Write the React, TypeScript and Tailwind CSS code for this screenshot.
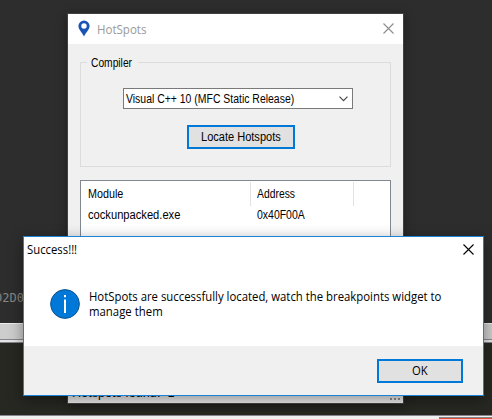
import { useLayoutEffect, useRef, useState } from "react";

const SANS = "font-['Liberation_Sans',sans-serif]";
const UI = "font-['Open_Sans','Noto_Sans',sans-serif]";

/** Single line label condensed or widened to an exact width. */
function Label({ text, width, className = "" }: { text: string; width: number; className?: string }) {
  const ref = useRef<HTMLSpanElement>(null);
  const [scale, setScale] = useState(1);
  useLayoutEffect(() => {
    if (ref.current) setScale(width / ref.current.offsetWidth);
  }, [text, width]);
  return (
    <span className={`block whitespace-nowrap ${className}`} style={{ width }}>
      <span ref={ref} className="inline-block origin-left" style={{ transform: `scaleX(${scale})` }}>
        {text}
      </span>
    </span>
  );
}

function Cross({ className }: { className: string }) {
  return (
    <svg className={className} width="11" height="11" viewBox="0 0 11 11" fill="none" stroke="currentColor" strokeWidth="1.1">
      <path d="M.5.5l10 10M10.5.5l-10 10" />
    </svg>
  );
}

function Backdrop() {
  return (
    <div className="flex h-full flex-col">
      <div className="flex h-[323px] items-end bg-[#2d2d2d]">
        <div className="-ml-[5px] mb-[17px] font-['DejaVu_Sans_Mono',monospace] text-[12px] leading-4 text-[#858585]">
          <Label text="02D0" width={29} />
        </div>
      </div>
      <div className="h-4 border-t border-[#ededed] bg-[#cdcdcd]" />
      <div className="h-1 border-y border-[#85858c] bg-[#e6e6e6]" />
      <div className="h-[72px] bg-[#272822]" />
      <div className="flex h-1 justify-end border-t border-[#8a858e] bg-[#f0f0f0]">
        <div className="mt-px h-[2px] w-[53px] border-t border-[#828790] bg-[#dc4f34]" />
      </div>
    </div>
  );
}

function HotSpotsWindow() {
  return (
    <div className={`absolute left-[67px] top-[13px] flex h-[391px] w-[337px] flex-col border border-[#424242] bg-[#f0f0f0] text-[12px] leading-4 text-black shadow-[0_2px_10px_rgba(0,0,0,0.35)] ${SANS}`}>
      <div className="flex h-[30px] shrink-0 items-center bg-white pl-[10px] pr-[9px]">
        <svg width="12" height="17" viewBox="0 0 12 17" className="-mt-[2px]">
          <path fill="#1a54b5" fillRule="evenodd" d="M6 .5A5.6 5.6 0 0 0 .4 6.1C.4 9.8 4 12.5 6 16.5c2-4 5.6-6.7 5.6-10.4A5.6 5.6 0 0 0 6 .5Zm0 2.8a2.7 2.7 0 1 1 0 5.4 2.7 2.7 0 0 1 0-5.4Z" />
        </svg>
        <Label text="HotSpots" width={49} className={`ml-[7px] mt-px text-[#999] ${UI}`} />
        <Cross className="ml-auto mt-[-2px] text-[#8c8c8c]" />
      </div>

      <div className="mx-3 mt-[18px] flex h-[105px] w-[311px] shrink-0 flex-col border border-[#dcdcdc]">
        <div className="-mt-[8px] ml-[6px] w-[51px] bg-[#f0f0f0] pl-1">
          <Label text="Compiler" width={41} />
        </div>
        <div className="ml-[42px] mt-[17px] flex h-[21px] w-[230px] items-center justify-between border border-[#7a7a7a] bg-white pl-[2px] pr-1">
          <Label text="Visual C++ 10 (MFC Static Release)" width={168} />
          <svg width="9" height="6" viewBox="0 0 9 6" fill="none" stroke="#4a4a4a" strokeWidth="1.2">
            <path d="M.5.7l4 4 4-4" />
          </svg>
        </div>
        <button className="ml-[106px] mt-4 flex h-6 w-[108px] items-center justify-center border-2 border-[#0078d7] bg-[#e1e1e1]">
          <Label text="Locate Hotspots" width={80} />
        </button>
      </div>

      <div className="mx-3 mt-[13px] h-[200px] w-[311px] shrink-0 border border-[#828790] bg-white">
        <div className="mt-px flex h-6 items-center">
          <div className="flex h-full w-[170px] items-center border-r border-[#e2e2e2] pl-[7px]">
            <Label text="Module" width={35} />
          </div>
          <div className="flex h-full w-[103px] items-center border-r border-[#e2e2e2] pl-[6px]">
            <Label text="Address" width={38} />
          </div>
        </div>
        <div className="mt-px flex">
          <div className="w-[170px] pl-[7px]">
            <Label text="cockunpacked.exe" width={92} />
          </div>
          <div className="pl-[6px]">
            <Label text="0x40F00A" width={48} />
          </div>
        </div>
      </div>

      <div className="mt-auto flex h-[20px] items-end justify-between pl-1 pr-[3px]">
        <Label text="Hotspots found:  1" width={102} className="mb-[2px] whitespace-pre" />
        <div className="mb-[3px] flex gap-[2px]">
          <i className="size-[2px] bg-[#929292]" />
          <i className="size-[2px] bg-[#929292]" />
          <i className="size-[2px] bg-[#929292]" />
        </div>
      </div>
    </div>
  );
}

function SuccessDialog() {
  return (
    <div className={`absolute left-[23px] top-[236px] flex h-[160px] w-[461px] flex-col border border-[#1883d7] bg-white text-[12px] text-black shadow-[0_4px_14px_rgba(0,0,0,0.4)] ${UI}`}>
      <div className="flex h-6 items-center justify-between pl-[3px] pr-[9px] leading-4">
        <Label text="Success!!!" width={50} className="mt-px" />
        <Cross className="text-black" />
      </div>
      <div className="flex h-[85px] pl-[26px] pt-[28px]">
        <svg width="30" height="30" viewBox="0 0 30 30" className="shrink-0">
          <circle cx="15" cy="15" r="14.4" fill="#0078d7" stroke="#12568f" strokeWidth="1" />
          <path fill="#fff" d="M14 6h2v2.2h-2zM14 10.5h2V24h-2z" />
        </svg>
        <div className="ml-[9px] leading-[15px]">
          <Label text="HotSpots are successfully located, watch the breakpoints widget to" width={352} />
          <Label text="manage them" width={74} />
        </div>
      </div>
      <div className="flex h-[49px] items-center justify-end bg-[#f0f0f0] pr-5">
        <button className="flex h-6 w-[86px] items-center justify-center border-2 border-[#0078d7] bg-[#e1e1e1]">
          <Label text="OK" width={16} />
        </button>
      </div>
    </div>
  );
}

export default function App() {
  return (
    <div className="relative h-[419px] w-[492px] overflow-hidden">
      <Backdrop />
      <HotSpotsWindow />
      <SuccessDialog />
    </div>
  );
}
